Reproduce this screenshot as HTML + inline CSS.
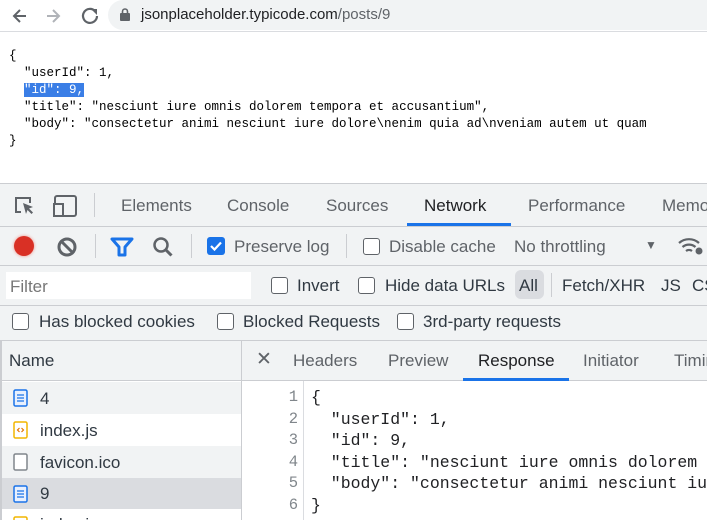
<!DOCTYPE html>
<html><head><meta charset="utf-8"><style>
*{margin:0;padding:0;box-sizing:border-box}
html,body{width:707px;height:520px;overflow:hidden}
body{background:#fff;font-family:"Liberation Sans",sans-serif;color:#303942;position:relative}
#wrap{position:absolute;left:0;top:0;width:707px;height:520px;overflow:hidden}
.abs{position:absolute;white-space:nowrap}
.mono{font-family:"Liberation Mono","DejaVu Sans Mono",monospace}
.ui{font-size:17px;color:#5f6368}
.cb{position:absolute;width:16px;height:16px;border:1.5px solid #5f6368;border-radius:3px;background:#fff}
</style></head><body><div id="wrap">
<div class="abs" style="left:0;top:0;width:707px;height:32px;background:#fff;border-bottom:1px solid #dadce0"></div>
<svg class="abs" style="left:10px;top:6px" width="90" height="20" viewBox="0 0 90 20">
<path d="M16 10H5M10 4L4 10l6 6" fill="none" stroke="#5f6368" stroke-width="2"/>
<path d="M37 10h11M43 4l6 6-6 6" fill="none" stroke="#b0b3b8" stroke-width="2"/>
<path d="M87 10a7 7 0 1 1-2-5" fill="none" stroke="#5f6368" stroke-width="2.2"/><path d="M81 3h6v6z" fill="#5f6368"/>
</svg>
<div class="abs" style="left:108px;top:0;width:599px;height:30px;background:#f1f3f4;border-radius:15px 0 0 15px"></div>
<svg class="abs" style="left:120px;top:8px" width="10" height="13"><rect x="0" y="5" width="10" height="8" rx="1" fill="#5f6368"/><path d="M2.5 5V3.5a2.5 2.5 0 0 1 5 0V5" fill="none" stroke="#5f6368" stroke-width="1.6"/></svg>
<div class="abs" style="left:141px;top:6px;font-size:15px;color:#202124">jsonplaceholder.typicode.com<span style="color:#5f6368">/posts/9</span></div>
<div class="abs mono" style="left:9px;top:48px;font-size:12.5px;line-height:17px;color:#000;white-space:pre">{
  "userId": 1,
  <span style="background:#3a7ee6;color:#fff">"id": 9,</span>
  "title": "nesciunt iure omnis dolorem tempora et accusantium",
  "body": "consectetur animi nesciunt iure dolore\nenim quia ad\nveniam autem ut quam</div>
<div class="abs mono" style="left:9px;top:133px;font-size:12.5px;line-height:17px;color:#000">}</div>
<div class="abs" style="left:0;top:183px;width:707px;height:337px;background:#f1f3f4;border-top:1px solid #cbcdd1"></div>
<div class="abs" style="left:0;top:226px;width:707px;height:1px;background:#cbcdd1"></div>
<svg class="abs" style="left:12px;top:193px" width="70" height="26" viewBox="0 0 70 26">
<path d="M9 19H4V5h14v5" fill="none" stroke="#5f6368" stroke-width="2"/><path d="M11 10l10 4-4 1.5 4 4-1.5 1.5-4-4L14 21z" fill="#5f6368"/>
<rect x="43" y="3" width="21" height="20" rx="2" fill="none" stroke="#5f6368" stroke-width="2"/><rect x="42" y="11" width="9" height="12" fill="#f1f3f4" stroke="#5f6368" stroke-width="2"/>
</svg>
<div class="abs" style="left:94px;top:193px;width:1px;height:24px;background:#cbcdd1"></div>
<div class="abs ui" style="left:121px;top:196px">Elements</div>
<div class="abs ui" style="left:227px;top:196px">Console</div>
<div class="abs ui" style="left:326px;top:196px">Sources</div>
<div class="abs ui" style="left:424px;top:196px;color:#202124">Network</div>
<div class="abs" style="left:407px;top:223px;width:104px;height:3px;background:#1a73e8"></div>
<div class="abs ui" style="left:528px;top:196px">Performance</div>
<div class="abs ui" style="left:662px;top:196px;width:45px;overflow:hidden">Memory</div>
<div class="abs" style="left:0;top:265px;width:707px;height:1px;background:#cbcdd1"></div>
<div class="abs" style="left:14px;top:236px;width:20px;height:20px;border-radius:50%;background:#d93025;box-shadow:0 0 3px #f28b82"></div>
<svg class="abs" style="left:56px;top:236px" width="22" height="22"><circle cx="11" cy="11" r="8" fill="none" stroke="#5f6368" stroke-width="3"/><path d="M5.5 5.5l11 11" stroke="#5f6368" stroke-width="3"/></svg>
<div class="abs" style="left:95px;top:234px;width:1px;height:24px;background:#cbcdd1"></div>
<svg class="abs" style="left:110px;top:237px" width="24" height="20"><path d="M2 2h20l-7 8v8h-6v-8z" fill="none" stroke="#1a73e8" stroke-width="3" stroke-linejoin="round"/></svg>
<svg class="abs" style="left:152px;top:236px" width="22" height="22"><circle cx="9" cy="9" r="6.5" fill="none" stroke="#5f6368" stroke-width="2.5"/><path d="M13.5 13.5l6 6" stroke="#5f6368" stroke-width="3"/></svg>
<div class="abs" style="left:191px;top:234px;width:1px;height:24px;background:#cbcdd1"></div>
<div class="abs" style="left:207px;top:237px;width:18px;height:18px;border-radius:3px;background:#1a73e8"></div>
<svg class="abs" style="left:207px;top:237px" width="18" height="18"><path d="M4 9l3.5 3.5L14 5.5" fill="none" stroke="#fff" stroke-width="2.2"/></svg>
<div class="abs ui" style="left:234px;top:237px">Preserve log</div>
<div class="abs" style="left:346px;top:234px;width:1px;height:24px;background:#cbcdd1"></div>
<div class="cb" style="left:363px;top:238px;width:17px;height:17px"></div>
<div class="abs ui" style="left:389px;top:237px">Disable cache</div>
<div class="abs ui" style="left:514px;top:237px">No throttling</div>
<div class="abs" style="left:645px;top:238px;font-size:12px;color:#5f6368">▼</div>
<svg class="abs" style="left:677px;top:236px" width="30" height="20"><path d="M2 7a15 15 0 0 1 20 0M5.5 11a10 10 0 0 1 13 0M9 15a5 5 0 0 1 6 0" fill="none" stroke="#5f6368" stroke-width="2.2"/><circle cx="22" cy="15" r="3.5" fill="#5f6368"/></svg>
<div class="abs" style="left:0;top:305px;width:707px;height:1px;background:#cbcdd1"></div>
<div class="abs" style="left:6px;top:272px;width:245px;height:27px;background:#fff"></div>
<div class="abs ui" style="left:10px;top:277px;color:#777">Filter</div>
<div class="cb" style="left:271px;top:277px;width:17px;height:17px"></div>
<div class="abs ui" style="left:297px;top:276px;color:#303942">Invert</div>
<div class="cb" style="left:358px;top:277px;width:17px;height:17px"></div>
<div class="abs ui" style="left:385px;top:276px;color:#303942">Hide data URLs</div>
<div class="abs" style="left:515px;top:270px;width:29px;height:29px;border-radius:6px;background:#dadce0"></div>
<div class="abs ui" style="left:519px;top:276px;color:#303942">All</div>
<div class="abs" style="left:551px;top:273px;width:1px;height:24px;background:#cbcdd1"></div>
<div class="abs ui" style="left:562px;top:276px;color:#303942">Fetch/XHR</div>
<div class="abs ui" style="left:661px;top:276px;color:#303942">JS</div>
<div class="abs ui" style="left:692px;top:276px;color:#303942;width:15px;overflow:hidden">CSS</div>
<div class="cb" style="left:12px;top:313px;width:17px;height:17px"></div>
<div class="abs ui" style="left:39px;top:312px;color:#303942">Has blocked cookies</div>
<div class="cb" style="left:217px;top:313px;width:17px;height:17px"></div>
<div class="abs ui" style="left:243px;top:312px;color:#303942">Blocked Requests</div>
<div class="cb" style="left:397px;top:313px;width:17px;height:17px"></div>
<div class="abs ui" style="left:423px;top:312px;color:#303942">3rd-party requests</div>
<div class="abs" style="left:0;top:340px;width:707px;height:1px;background:#cbcdd1"></div>
<div class="abs" style="left:0;top:341px;width:242px;height:179px;background:#fff;border-right:1px solid #cbcdd1;border-left:2px solid #cbcdd1"></div>
<div class="abs" style="left:2px;top:341px;width:239px;height:40px;background:#f1f3f4;border-bottom:1px solid #cbcdd1"></div>
<div class="abs ui" style="left:9px;top:351px;color:#303942">Name</div>
<div class="abs" style="left:2px;top:382px;width:239px;height:32px;background:#f1f3f4"></div>
<div class="abs" style="left:2px;top:446px;width:239px;height:32px;background:#f1f3f4"></div>
<div class="abs" style="left:2px;top:478px;width:239px;height:31px;background:#dadce0"></div>
<svg class="abs" style="left:13px;top:389px" width="17" height="20"><rect x="1" y="1" width="13" height="16" rx="1.5" fill="#e8f0fe" stroke="#1a73e8" stroke-width="1.5"/><path d="M4 6h7M4 9h7M4 12h7" stroke="#1a73e8" stroke-width="1.3"/></svg>
<div class="abs ui" style="left:40px;top:389px;color:#303942">4</div>
<svg class="abs" style="left:13px;top:421px" width="17" height="20"><rect x="1" y="1" width="13" height="16" rx="1.5" fill="#fff" stroke="#f2b600" stroke-width="1.5"/><path d="M6.5 7l-2 2 2 2M8.5 7l2 2-2 2" fill="none" stroke="#e37400" stroke-width="1.2"/></svg>
<div class="abs ui" style="left:40px;top:421px;color:#303942">index.js</div>
<svg class="abs" style="left:13px;top:453px" width="17" height="20"><rect x="1" y="1" width="13" height="16" rx="1.5" fill="#fff" stroke="#80868b" stroke-width="1.5"/></svg>
<div class="abs ui" style="left:40px;top:453px;color:#303942">favicon.ico</div>
<svg class="abs" style="left:13px;top:485px" width="17" height="20"><rect x="1" y="1" width="13" height="16" rx="1.5" fill="#e8f0fe" stroke="#1a73e8" stroke-width="1.5"/><path d="M4 6h7M4 9h7M4 12h7" stroke="#1a73e8" stroke-width="1.3"/></svg>
<div class="abs ui" style="left:40px;top:484px;color:#303942">9</div>
<svg class="abs" style="left:13px;top:516px" width="17" height="4"><rect x="1" y="1" width="13" height="16" rx="1.5" fill="#fff" stroke="#f2b600" stroke-width="1.5"/></svg>
<div class="abs ui" style="left:40px;top:515px;color:#303942">index.js</div>
<div class="abs" style="left:242px;top:380px;width:465px;height:1px;background:#cbcdd1"></div>
<div class="abs" style="left:242px;top:381px;width:465px;height:139px;background:#fff"></div>
<div class="abs" style="left:256px;top:348px;font-size:19px;color:#5f6368">✕</div>
<div class="abs ui" style="left:293px;top:351px">Headers</div>
<div class="abs ui" style="left:388px;top:351px">Preview</div>
<div class="abs ui" style="left:478px;top:351px;color:#202124">Response</div>
<div class="abs" style="left:463px;top:378px;width:106px;height:3px;background:#1a73e8"></div>
<div class="abs ui" style="left:583px;top:351px">Initiator</div>
<div class="abs ui" style="left:674px;top:351px;width:33px;overflow:hidden">Timing</div>
<div class="abs" style="left:303px;top:381px;width:1px;height:139px;background:#dadce0"></div>
<div class="abs mono" style="left:270px;top:387px;width:28px;text-align:right;font-size:15.5px;line-height:21.5px;color:#80868b;white-space:pre">1
2
3
4
5
6</div>
<div class="abs mono" style="left:311px;top:387px;width:396px;overflow:hidden;font-size:16.5px;line-height:21.5px;color:#202124;white-space:pre">{
  "userId": 1,
  "id": 9,
  "title": "nesciunt iure omnis dolorem
  "body": "consectetur animi nesciunt iu
}</div>
</div></body></html>
